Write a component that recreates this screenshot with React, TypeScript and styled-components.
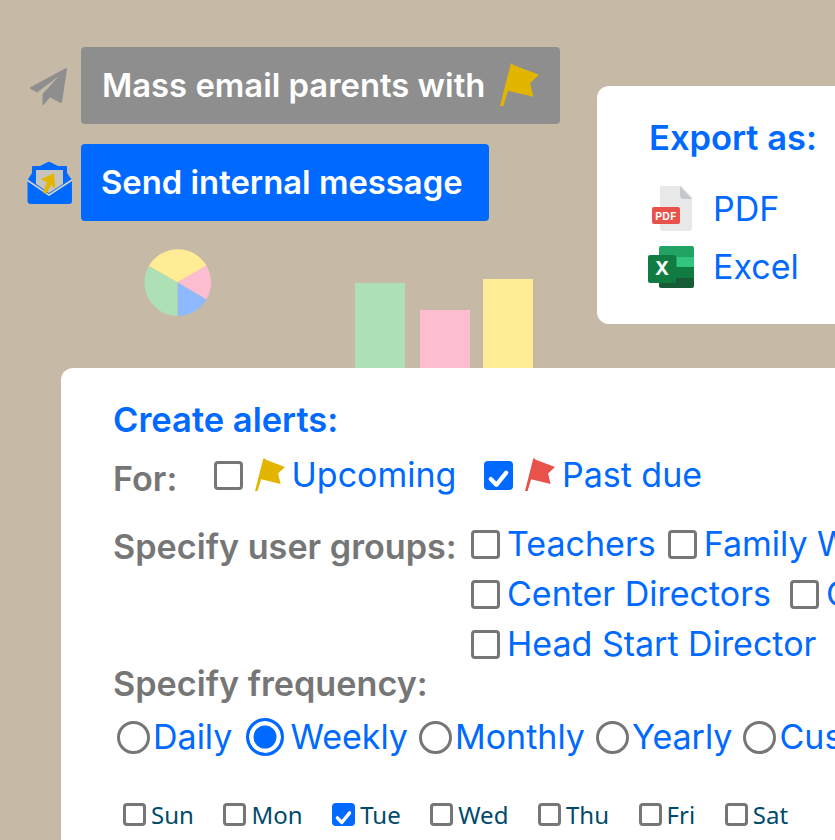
import React from 'react';
import styled, { createGlobalStyle } from 'styled-components';

const GlobalStyle = createGlobalStyle`
  html, body {
    margin: 0;
    padding: 0;
    background: #c6baa6;
  }
  body {
    font-family: Inter, "Liberation Sans", sans-serif;
  }
`;

const BLUE = '#0069ff';
const GREY = '#767676';

const FlagIcon: React.FC<{ color: string; height: number }> = ({ color, height }) => (
  <svg width={height * 0.91} height={height} viewBox="0 0 117 128" fill={color}>
    <path d="M32 3 L36 0 L40 6 L117 35 L90 60 L100 101 L24 83 L10 128 L0 128 Z" />
  </svg>
);

const PlaneIcon = () => (
  <svg width="38" height="38" viewBox="0 0 38 38" fill="#8e8e8e">
    <path d="M37 1 Q38 0.5 38 2 L33 35 Q32.5 36.5 31 35.7 L21 30.3 L15 37.5 Q13.5 39 13.5 37 L13.5 27 L30 9 L8 25.5 L1 21.5 Q0 21 1 20.5 Z" />
  </svg>
);

const EnvelopeIcon = () => (
  <svg width="46" height="44" viewBox="0 0 46 44">
    <path
      fill={BLUE}
      d="M0.5 19 L5 12 L5 6 Q5 5 6 5 L13 5 L21 1 Q22 0.5 23 1 L31 5 L39 5 Q40 5 40 6 L40 12 L45 19 L45 40 Q45 43 42 43 L4 43 Q0.5 43 0.5 40 Z"
    />
    <path fill="#c7c4bc" d="M9 9 L36 9 L36 23 L22 32 L9 23 Z" />
    <path fill="#d8d2c4" d="M0 18 L22 33 L45 18 L45 20 L22 35 L0 20 Z" />
    <path fill="#e2b500" d="M13.7 18.3 L27 12.3 L28.3 28.3 L24 24 L19 33 L16 31.5 L20 21.5 Z" />
  </svg>
);

const PdfIcon = () => (
  <svg width="44" height="46" viewBox="-3 0 44 46">
    <path fill="#e8e8e8" d="M9 0 L30 0 L41 11 L41 42 Q41 45 38 45 L12 45 Q9 45 9 42 Z" />
    <path fill="#c4c8cc" d="M29 0 L41 13 L33 13 Q29 13 29 9 Z" />
    <rect x="1" y="21" width="28" height="17" rx="2" fill="#e8524a" />
    <text x="15" y="33.5" fontSize="10.5" fontWeight="700" textAnchor="middle" fill="#fff" fontFamily="Inter, sans-serif" letterSpacing="0.4">
      PDF
    </text>
  </svg>
);

const ExcelIcon = () => (
  <svg width="46" height="42" viewBox="0 0 46 42">
    <path fill="#21a366" d="M11 2 Q11 0 13 0 L44 0 Q46 0 46 2 L46 21 L11 21 Z" />
    <rect x="29" y="11" width="17" height="10" fill="#33c481" />
    <rect x="11" y="21" width="35" height="11" fill="#107c41" />
    <path fill="#185c37" d="M11 32 L46 32 L46 40 Q46 42 44 42 L13 42 Q11 42 11 40 Z" />
    <rect x="11" y="10" width="17" height="27" fill="#0d5b30" opacity="0.55" />
    <rect x="0" y="9" width="28" height="28" rx="2" fill="#107c41" />
    <text x="14" y="29" fontSize="19" fontWeight="700" textAnchor="middle" fill="#fff" fontFamily="Inter, sans-serif">
      X
    </text>
  </svg>
);

const PieChart = () => (
  <svg width="67" height="67" viewBox="0 0 67 67">
    <path fill="#ffec94" d="M33.5 33.5 L4.8 17 A33.5 33.5 0 0 1 62.5 16.5 Z" />
    <path fill="#fcbdd0" d="M33.5 33.5 L62.5 16.5 A33.5 33.5 0 0 1 62.5 50.5 Z" />
    <path fill="#8fb9ff" d="M33.5 33.5 L62.5 50.5 A33.5 33.5 0 0 1 33.5 67 Z" />
    <path fill="#aee0b5" d="M33.5 33.5 L33.5 67 A33.5 33.5 0 0 1 4.8 17 Z" />
  </svg>
);

const CheckMark = () => (
  <svg width="100%" height="100%" viewBox="0 0 30 30" fill="none">
    <path d="M7 15.5 L12.8 21.5 L23 9" stroke="#fff" strokeWidth="4.4" strokeLinecap="round" strokeLinejoin="round" />
  </svg>
);

const Page = styled.div`
  width: 835px;
  height: 840px;
  overflow: hidden;
  background: #c6baa6;
`;

const Top = styled.section`
  display: flex;
  height: 368px;
`;

const LeftColumn = styled.div`
  width: 597px;
  flex-shrink: 0;
  display: flex;
  flex-direction: column;
  padding-top: 47px;
  box-sizing: border-box;
`;

const ActionRow = styled.div`
  display: flex;
  align-items: center;
  margin-bottom: 20px;
`;

const IconSlot = styled.div`
  width: 81px;
  padding-left: 27px;
  box-sizing: border-box;
  display: flex;
  align-items: center;
`;

const PlaneSlot = styled(IconSlot)`
  padding-left: 29px;
`;

const ActionButton = styled.div<{ $primary?: boolean }>`
  display: flex;
  align-items: center;
  gap: 15px;
  box-sizing: border-box;
  height: 77px;
  padding: 0 ${p => (p.$primary ? 26 : 20)}px 2px ${p => (p.$primary ? 20 : 21)}px;
  border-radius: 4px;
  background: ${p => (p.$primary ? BLUE : '#8e8e8e')};
  color: #fff;
  font-size: 32.8px;
  font-weight: 600;
  white-space: nowrap;
`;

const Charts = styled.div`
  flex: 1;
  display: flex;
  justify-content: flex-start;
  padding-left: 144px;
  margin-top: 8px;
`;

const PieSlot = styled.div`
  width: 211px;
`;

const Bars = styled.div`
  display: flex;
  align-items: flex-end;
  height: 100%;
`;

const Bar = styled.div<{ $h: number; $color: string; $left?: number }>`
  width: 50px;
  height: ${p => p.$h}px;
  margin-left: ${p => p.$left ?? 0}px;
  background: ${p => p.$color};
`;

const ExportCard = styled.div`
  margin-top: 86px;
  width: 300px;
  height: 238px;
  flex-shrink: 0;
  box-sizing: border-box;
  padding: 32px 0 0 52px;
  background: #fff;
  border-radius: 12px;
`;

const CardTitle = styled.h2`
  margin: 0;
  font-size: 34.5px;
  line-height: 40px;
  font-weight: 600;
  color: ${BLUE};
  white-space: nowrap;
`;

const ExportRow = styled.div`
  display: flex;
  align-items: center;
  height: 58px;
  font-size: 34px;
  line-height: 40px;
  color: ${BLUE};
`;

const ExportIconSlot = styled.div`
  width: 65px;
  margin-left: -1px;
  display: flex;
  align-items: center;
`;

const ExportList = styled.div`
  margin-top: 22px;
`;

const AlertCard = styled.section`
  margin-left: 61px;
  width: 900px;
  height: 472px;
  box-sizing: border-box;
  padding: 32px 0 0 52px;
  background: #fff;
  border-radius: 12px 0 0 0;
`;

const ForRow = styled.div`
  display: flex;
  align-items: center;
  height: 56px;
  margin-top: 7px;
`;

const Label = styled.div`
  font-size: 34.2px;
  line-height: 40px;
  font-weight: 600;
  color: ${GREY};
  white-space: nowrap;
`;

const ForLabel = styled(Label)`
  width: 101px;
  padding-top: 8px;
`;

const Option = styled.label<{ $gap?: number }>`
  display: inline-flex;
  align-items: center;
  gap: ${p => p.$gap ?? 7}px;
  font-size: 34px;
  line-height: 40px;
  color: ${BLUE};
  white-space: nowrap;
`;

const Box = styled.span<{ $checked?: boolean; $size?: number }>`
  display: block;
  box-sizing: border-box;
  flex-shrink: 0;
  width: ${p => p.$size ?? 29}px;
  height: ${p => p.$size ?? 29}px;
  border-radius: 4px;
  border: ${p => (p.$checked ? 'none' : `3px solid ${GREY}`)};
  background: ${p => (p.$checked ? BLUE : '#fff')};
`;

const ForOptions = styled.div`
  display: flex;
  align-items: center;
  gap: 28px;
`;

const ForOption = styled(Option)`
  gap: 8px;
`;

const FlagWrap = styled.span`
  display: flex;
  margin: -2px -1px 0 3.5px;
`;

const GroupsRow = styled.div`
  display: flex;
  margin-top: 21px;
`;

const GroupsLabel = styled(Label)`
  width: 358px;
  padding-top: 3px;
  flex-shrink: 0;
`;

const GroupsGrid = styled.div`
  display: flex;
  flex-direction: column;
  gap: 10px;
`;

const GroupLine = styled.div<{ $gap: number }>`
  display: flex;
  align-items: center;
  gap: ${p => p.$gap}px;
  height: 40px;
`;

const RadioRow = styled.div`
  display: flex;
  align-items: center;
  gap: 11px;
  margin: 13px 0 0 4px;
  height: 40px;
`;

const Radio = styled.span<{ $checked?: boolean }>`
  display: block;
  box-sizing: border-box;
  flex-shrink: 0;
  width: ${p => (p.$checked ? 38 : 33)}px;
  height: ${p => (p.$checked ? 38 : 33)}px;
  margin: 0 ${p => (p.$checked ? 3 : 0)}px 0 ${p => (p.$checked ? 3 : 0)}px;
  border-radius: 50%;
  border: 3px solid ${p => (p.$checked ? BLUE : GREY)};
  background: ${p => (p.$checked ? BLUE : '#fff')};
  box-shadow: ${p => (p.$checked ? 'inset 0 0 0 4.5px #fff' : 'none')};
`;

const DaysRow = styled.div`
  display: flex;
  align-items: center;
  gap: 29.6px;
  margin: 41px 0 0 10px;
`;

const Day = styled.label`
  display: inline-flex;
  align-items: center;
  gap: 5px;
  font-family: "Noto Sans", sans-serif;
  font-size: 24px;
  color: #004a6b;
`;

const groupLines = [
  { gap: 12, items: ['Teachers', 'Family Workers'] },
  { gap: 19, items: ['Center Directors', 'Coaches'] },
  { gap: 12, items: ['Head Start Director'] },
];

const frequencies = ['Daily', 'Weekly', 'Monthly', 'Yearly', 'Custom'];
const days = ['Sun', 'Mon', 'Tue', 'Wed', 'Thu', 'Fri', 'Sat'];

const App: React.FC = () => (
  <Page>
    <GlobalStyle />
    <Top>
      <LeftColumn>
        <ActionRow>
          <PlaneSlot><PlaneIcon /></PlaneSlot>
          <ActionButton>
            Mass email parents with
            <FlagIcon color="#e2b500" height={43} />
          </ActionButton>
        </ActionRow>
        <ActionRow>
          <IconSlot><EnvelopeIcon /></IconSlot>
          <ActionButton $primary>Send internal message</ActionButton>
        </ActionRow>
        <Charts>
          <PieSlot><PieChart /></PieSlot>
          <Bars>
            <Bar $h={85} $color="#aee0b5" />
            <Bar $h={58} $color="#fcbdd0" $left={15} />
            <Bar $h={89} $color="#ffec94" $left={13} />
          </Bars>
        </Charts>
      </LeftColumn>
      <ExportCard>
        <CardTitle>Export as:</CardTitle>
        <ExportList>
          <ExportRow>
            <ExportIconSlot><PdfIcon /></ExportIconSlot>
            PDF
          </ExportRow>
          <ExportRow>
            <ExportIconSlot><ExcelIcon /></ExportIconSlot>
            Excel
          </ExportRow>
        </ExportList>
      </ExportCard>
    </Top>
    <AlertCard>
      <CardTitle>Create alerts:</CardTitle>
      <ForRow>
        <ForLabel>For:</ForLabel>
        <ForOptions>
          <ForOption>
            <Box />
            <FlagWrap><FlagIcon color="#e2b500" height={33} /></FlagWrap>
            Upcoming
          </ForOption>
          <ForOption>
            <Box $checked><CheckMark /></Box>
            <FlagWrap><FlagIcon color="#e8524a" height={33} /></FlagWrap>
            Past due
          </ForOption>
        </ForOptions>
      </ForRow>
      <GroupsRow>
        <GroupsLabel>Specify user groups:</GroupsLabel>
        <GroupsGrid>
          {groupLines.map(line => (
            <GroupLine key={line.items[0]} $gap={line.gap}>
              {line.items.map(group => (
                <Option key={group}>
                  <Box />
                  {group}
                </Option>
              ))}
            </GroupLine>
          ))}
        </GroupsGrid>
      </GroupsRow>
      <Label>Specify frequency:</Label>
      <RadioRow>
        {frequencies.map(freq => (
          <Option key={freq} $gap={3}>
            <Radio $checked={freq === 'Weekly'} />
            {freq}
          </Option>
        ))}
      </RadioRow>
      <DaysRow>
        {days.map(day => (
          <Day key={day}>
            <Box $size={23} $checked={day === 'Tue'}>{day === 'Tue' && <CheckMark />}</Box>
            {day}
          </Day>
        ))}
      </DaysRow>
    </AlertCard>
  </Page>
);

export default App;
